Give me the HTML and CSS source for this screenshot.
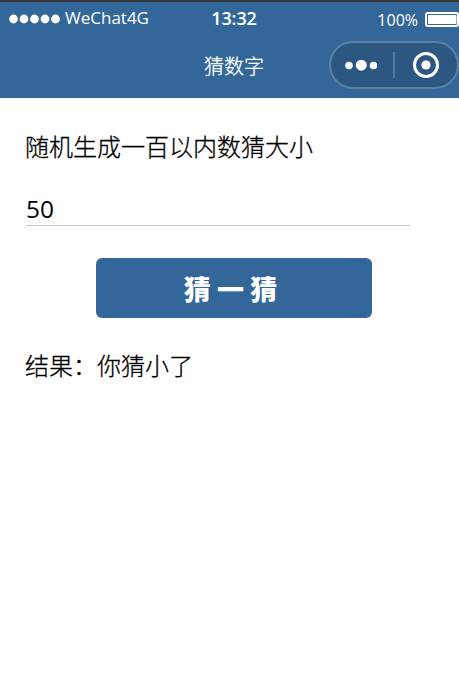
FILE: index.html
```html
<!DOCTYPE html>
<html lang="zh-CN">
<head>
<meta charset="utf-8">
<title>猜数字</title>
<link rel="stylesheet" href="styles.css">
</head>
<body>
<header class="header">
  <div class="status">
    <div class="carrier">
      <svg class="signal" width="52" height="10" viewBox="0 0 52 10" fill="#fff"><circle cx="4.5" cy="5" r="4.4"/><circle cx="15" cy="5" r="4.4"/><circle cx="25.5" cy="5" r="4.4"/><circle cx="36" cy="5" r="4.4"/><circle cx="46.5" cy="5" r="4.4"/></svg>
      <span class="network">WeChat4G</span>
    </div>
    <div class="time">13:32</div>
    <div class="power">
      <span class="percent">100%</span>
      <svg class="battery" width="34" height="15" viewBox="0 0 34 15"><rect x="1" y="1" width="32" height="13" rx="2" fill="none" stroke="#fff" stroke-width="2"/><rect x="3" y="3" width="28.5" height="9" rx="1" fill="#fff"/></svg>
    </div>
  </div>
  <div class="navbar">
    <h1 class="title">猜数字</h1>
    <div class="capsule">
      <svg class="more" width="32" height="12" viewBox="0 0 32 12" fill="#fff"><circle cx="4" cy="6.5" r="3.8"/><circle cx="16.3" cy="6.2" r="5.5"/><circle cx="28.5" cy="6.5" r="3.8"/></svg>
      <span class="divider"></span>
      <svg class="close" width="26" height="26" viewBox="0 0 26 26"><circle cx="13" cy="13" r="11.5" fill="none" stroke="#fff" stroke-width="3"/><circle cx="13" cy="13" r="4.6" fill="#fff"/></svg>
    </div>
  </div>
</header>
<main class="content">
  <p class="line">随机生成一百以内数猜大小</p>
  <input class="guess" type="text" value="50">
  <button class="submit" type="button">猜 一 猜</button>
  <p class="line">结果：你猜小了</p>
</main>
</body>
</html>
```
FILE: styles.css
```css
* { box-sizing: border-box; }

body {
  margin: 0;
  height: 695px;
  overflow: hidden;
  background: #fff;
  color: #000;
  font-family: "Noto Sans", "Noto Sans CJK SC", sans-serif;
}

.header {
  height: 98px;
  border-top: 2px solid #333;
  background: #369;
  color: #fff;
}

.status {
  display: grid;
  grid-template-columns: 205px 58px 1fr;
  height: 34px;
  line-height: 32px;
}

.carrier {
  display: flex;
  align-items: center;
  height: 33px;
  padding-left: 9px;
  gap: 4px;
}

.signal, .battery, .more, .close { display: block; flex: none; }
.signal { margin-top: 1px; }

.network {
  margin-top: -2px;
  font-family: "Open Sans", sans-serif;
  font-size: 17px;
}

.time {
  font-family: "Open Sans", sans-serif;
  font-size: 18px;
  font-weight: 600;
  letter-spacing: -0.1px;
  text-align: center;
}

.power {
  display: flex;
  justify-content: flex-end;
  align-items: center;
  height: 35px;
  gap: 7px;
}

.percent {
  font-family: "Open Sans", sans-serif;
  font-size: 16px;
}

.navbar {
  display: grid;
  grid-template-columns: 329px 130px;
  height: 60px;
}

.title {
  margin: 0;
  padding-left: 204px;
  font-family: "Noto Sans CJK SC", sans-serif;
  font-size: 20px;
  font-weight: 300;
  line-height: 60px;
  -webkit-text-stroke: 0.3px currentColor;
}

.capsule {
  display: flex;
  align-items: center;
  height: 48px;
  margin-top: 5px;
  padding-left: 14px;
  border: 2px solid #5c80a3;
  border-radius: 24px;
  background: #2c5782;
}

.divider {
  width: 2px;
  height: 26px;
  margin: 0 18px 0 16px;
  background: #56799b;
}

.content {
  display: flex;
  flex-direction: column;
  padding: 30px 25px 0;
}

.line {
  margin: 0;
  font-family: "Noto Sans CJK SC", sans-serif;
  font-size: 24px;
  font-weight: 300;
  line-height: 36px;
  -webkit-text-stroke: 0.3px currentColor;
}

.guess {
  width: 384px;
  height: 34px;
  margin: 28px 0 32px 1px;
  padding: 0;
  border: 0;
  border-bottom: 1px solid #c8c8c8;
  outline: 0;
  background: transparent;
  color: #000;
  font-family: "Open Sans", sans-serif;
  font-size: 24.5px;
}

.submit {
  width: 276px;
  height: 60px;
  margin: 0 0 29px 71px;
  padding: 1px 7px 0 0;
  border: 0;
  border-radius: 6px;
  background: #369;
  color: #fff;
  font-family: "Noto Sans CJK SC", sans-serif;
  font-size: 27px;
  font-weight: 900;
}
```
